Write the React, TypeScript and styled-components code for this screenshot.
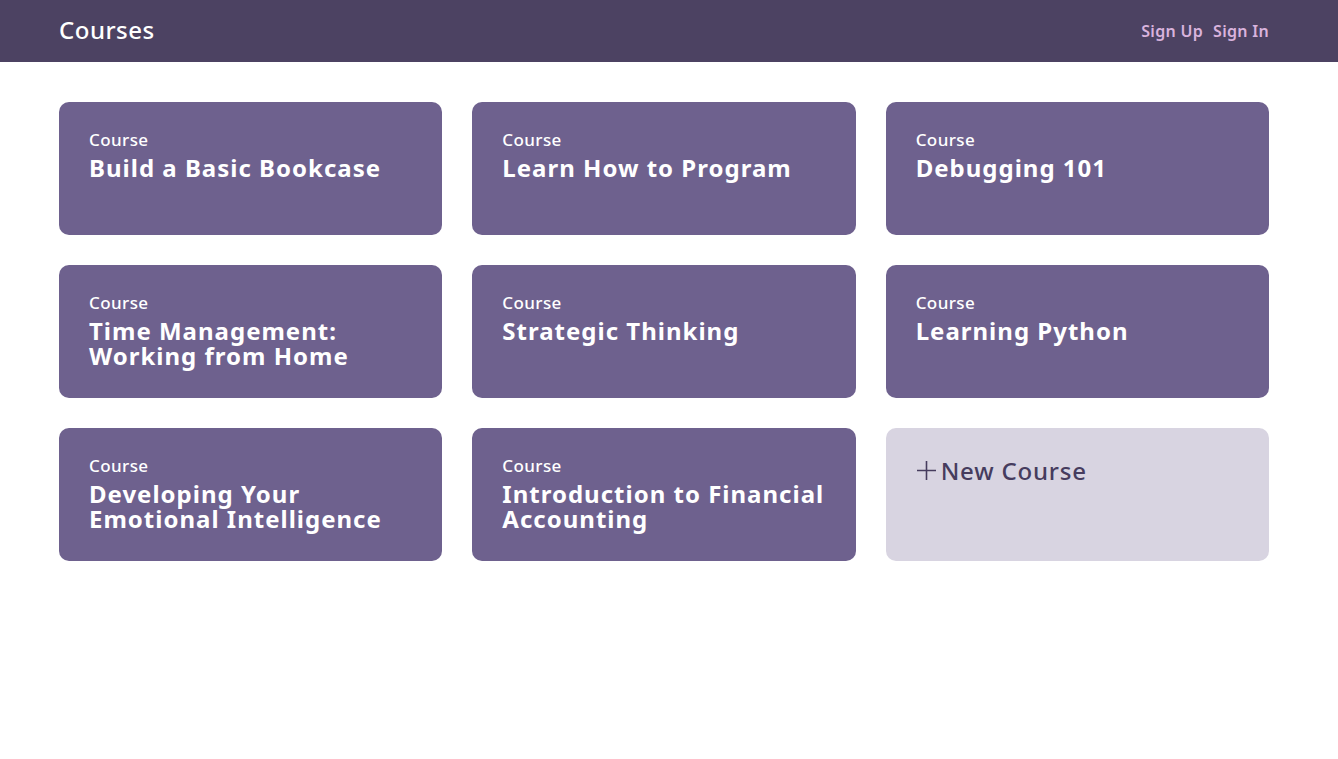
import React from "react";
import styled, { createGlobalStyle } from "styled-components";

const Global = createGlobalStyle`
  html, body { margin: 0; padding: 0; background: #ffffff; }
  body { font-family: "Noto Sans", "DejaVu Sans", sans-serif; }
  * { box-sizing: border-box; }
`;

const Header = styled.header`
  height: 62px;
  background: #4c4262;
  display: flex;
  align-items: center;
  justify-content: space-between;
  padding: 0 69px 3px 59px;
`;

const Brand = styled.div`
  color: #ffffff;
  font-size: 24px;
  font-weight: 500;
  letter-spacing: 0.5px;
`;

const Nav = styled.nav`
  display: flex;
  gap: 10px;
  padding-top: 2px;
`;

const NavLink = styled.a`
  color: #d9b3dd;
  font-size: 16px;
  font-weight: 600;
  letter-spacing: 0.3px;
  text-decoration: none;
`;

const Grid = styled.main`
  display: grid;
  grid-template-columns: repeat(3, 1fr);
  gap: 30px;
  width: 1210px;
  margin: 40px 0 0 59px;
`;

const Card = styled.div<{ $new?: boolean }>`
  height: 133px;
  border-radius: 10px;
  background: ${(p) => (p.$new ? "#d8d4e1" : "#6e618e")};
  padding: 27px 20px 0 30px;
  display: flex;
  flex-direction: column;
`;

const Label = styled.div`
  color: #ffffff;
  font-size: 17px;
  line-height: 22px;
  font-weight: 500;
  letter-spacing: 0.4px;
`;

const Title = styled.div`
  color: #ffffff;
  font-size: 24px;
  line-height: 25px;
  font-weight: 700;
  letter-spacing: 1px;
  margin-top: 4px;
`;

const NewLabel = styled.div`
  display: flex;
  align-items: center;
  gap: 4px;
  color: #463c5e;
  font-size: 24px;
  font-weight: 500;
  letter-spacing: 0.8px;
  margin-top: -1px;
`;

const courses = [
  "Build a Basic Bookcase",
  "Learn How to Program",
  "Debugging 101",
  "Time Management: Working from Home",
  "Strategic Thinking",
  "Learning Python",
  "Developing Your Emotional Intelligence",
  "Introduction to Financial Accounting",
];

export default function App() {
  return (
    <>
      <Global />
      <Header>
        <Brand>Courses</Brand>
        <Nav>
          <NavLink href="#">Sign Up</NavLink>
          <NavLink href="#">Sign In</NavLink>
        </Nav>
      </Header>
      <Grid>
        {courses.map((c) => (
          <Card key={c}>
            <Label>Course</Label>
            <Title>{c}</Title>
          </Card>
        ))}
        <Card $new>
          <NewLabel>
            <svg width="21" height="21" viewBox="0 0 21 21">
              <path d="M10.5 1v19M1 10.5h19" stroke="#463c5e" strokeWidth="1.6" />
            </svg>
            New Course
          </NewLabel>
        </Card>
      </Grid>
    </>
  );
}
